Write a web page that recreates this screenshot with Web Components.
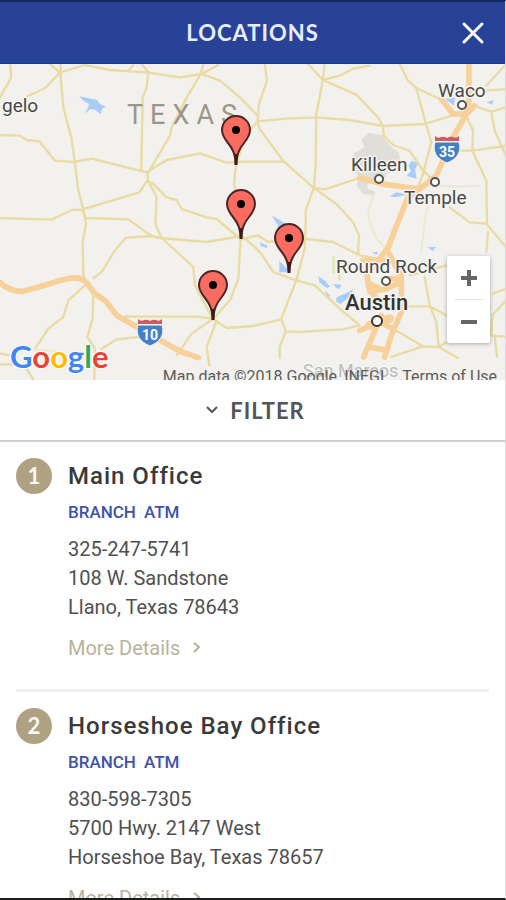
<!DOCTYPE html>
<html lang="en">
<head>
<meta charset="utf-8">
<meta name="viewport" content="width=device-width, initial-scale=1">
<title>Locations</title>
<style>
html,body{margin:0;height:100%}
body{font-family:Roboto,"Liberation Sans",sans-serif;color:#444;background:#fff}
</style>
</head>
<body>
<locations-app></locations-app>

<template id="app-t">
<style>
:host{display:flex;flex-direction:column;height:100vh;box-sizing:border-box;border-top:2px solid #17285c;border-right:1px solid #dcdcdc;border-bottom:2px solid #1c1c1c;background:#fefefe}
main{flex:1;min-height:0;overflow-y:auto;scrollbar-width:none}
ul{list-style:none;margin:0;padding:0}
</style>
<page-header>LOCATIONS</page-header>
<branch-map></branch-map>
<filter-bar>FILTER</filter-bar>
<main>
<ul>
<li><location-card number="1"><span slot="name">Main Office</span><span slot="phone">325-247-5741</span><span slot="street">108 W. Sandstone</span><span slot="city">Llano, Texas 78643</span></location-card></li>
<li><location-card number="2"><span slot="name">Horseshoe Bay Office</span><span slot="phone">830-598-7305</span><span slot="street">5700 Hwy. 2147 West</span><span slot="city">Horseshoe Bay, Texas 78657</span></location-card></li>
</ul>
</main>
</template>

<template id="header-t">
<style>
:host{display:grid;grid-template-columns:64px 1fr 64px;align-items:center;height:62px;flex:none;box-sizing:border-box;background:#284298;color:#e9edfb;border-bottom:1px solid #1f3a94}
h1{grid-column:2;margin:0;text-align:center;font:700 22px/30px Lato,sans-serif;letter-spacing:1px}
button{justify-self:center;display:grid;place-items:center;width:40px;height:40px;padding:0;border:0;background:none;color:#fff}
svg{display:block}
</style>
<h1><slot></slot></h1>
<button type="button" aria-label="Close"><svg width="24" height="24" viewBox="0 0 24 24" fill="none" stroke="currentColor" stroke-width="3" stroke-linecap="round"><path d="M3 3 21 21M21 3 3 21"/></svg></button>
</template>

<template id="filter-t">
<style>
:host{display:block;flex:none;background:#fefefe;border-bottom:2px solid #cfcfd1}
button{display:flex;align-items:center;justify-content:center;gap:12px;width:100%;height:60px;padding:2px 0 0 6px;border:0;background:none;color:#555557;font:700 22px/30px Lato,sans-serif;letter-spacing:1px}
</style>
<button type="button" aria-expanded="false"><svg width="12" height="12" viewBox="0 0 12 12" fill="none" stroke="currentColor" stroke-width="2"><path d="M1 2 6 7 11 2"/></svg><span><slot></slot></span></button>
</template>

<template id="card-t">
<style>
:host{display:grid;grid-template-columns:36px 1fr;column-gap:16px;margin:0 16px;padding:16px 0 26px;border-bottom:3px solid #efefef}
.num{display:grid;place-items:center;width:36px;height:36px;border-radius:50%;background:#aea283;color:#fbfaf5;font:700 22px/36px Lato,sans-serif}
h2{margin:0;font-size:24px;line-height:36px;font-weight:500;letter-spacing:1px;color:#3a3a3a}
.tags{display:flex;gap:8px;margin:5px 0 10px;font-size:17px;line-height:26px;font-weight:500;color:#3f54a6}
address{font-style:normal;font-size:20px;line-height:29px;color:#505050}
address ::slotted(span){display:block}
a{display:inline-flex;align-items:center;gap:12px;margin-top:11px;font-size:20px;line-height:30px;color:#bab29b;text-decoration:none}
</style>
<div class="num"></div>
<div>
<h2><slot name="name"></slot></h2>
<div class="tags"><span>BRANCH</span><span>ATM</span></div>
<address><slot name="phone"></slot><slot name="street"></slot><slot name="city"></slot></address>
<a href="#details"><span>More Details</span><svg width="8" height="12" viewBox="0 0 8 12" fill="none" stroke="currentColor" stroke-width="2"><path d="M2 1 7 5 2 10"/></svg></a>
</div>
</template>

<template id="zoom-t">
<style>
:host{display:flex;flex-direction:column;width:43px;background:#fff;border-radius:2px;box-shadow:0 1px 4px rgba(0,0,0,.3)}
button{display:grid;place-items:center;height:43px;padding:0;border:0;background:none;color:#666}
hr{width:30px;height:1px;margin:0 auto;border:0;background:#e6e6e6}
</style>
<button type="button" aria-label="Zoom in"><svg width="16" height="16" viewBox="0 0 16 16" stroke="currentColor" stroke-width="4"><path d="M0 8H16M8 0V16"/></svg></button>
<hr>
<button type="button" aria-label="Zoom out"><svg width="16" height="16" viewBox="0 0 16 16" stroke="currentColor" stroke-width="4"><path d="M0 8H16"/></svg></button>
</template>

<template id="map-t">
<style>
:host{display:block;position:relative;flex:none;height:316px;overflow:hidden;background:#f2f1ee}
.canvas{display:block;width:100%;height:100%}
zoom-control{position:absolute;right:15px;top:192px}
.credit{position:absolute;right:8px;bottom:-7px;display:flex;gap:18px;font-size:16px;line-height:20px;color:#5c5c5c;white-space:nowrap}
.credit a{color:inherit;text-decoration:none}
.roads path{fill:none;stroke:#e9dba2;stroke-width:7;stroke-linejoin:round;stroke-linecap:round}
.roads path.faint{stroke:#ece7d0;stroke-width:5}
.roads path.hwy{stroke:#f8d09a;stroke-width:17}
.roads path.thick{stroke-width:26}
.roads .water path{fill:#a9cdf8;stroke:none}
.roads path.base{fill:#dfded8;stroke:none}
.town{fill:#fff;stroke:#555;stroke-width:2}
.lbl{fill:#484848;stroke:#f6f5f2;stroke-width:3;paint-order:stroke;stroke-linejoin:round;font-size:19px}
</style>
<svg class="canvas" viewBox="0 0 505 316" preserveAspectRatio="xMidYMid slice" role="img" aria-label="Map of central Texas">
<defs>
<g id="pin"><path d="M0 0C-1-11-3-16-8-22C-12-27-14-30-14-35A14 14 0 0 1 14-35C14-30 12-27 8-22C3-16 1-11 0 0Z" fill="#fa6b60" stroke="#4a2523" stroke-width="2"/><path d="M0 0V-11" stroke="#3b1a19" stroke-width="3"/><circle cy="-35" r="4" fill="#000"/></g>
<g id="shield"><path d="M-12-6H12C15 4 10 11 0 15C-10 11-15 4-12-6Z" fill="#4480c5" stroke="#f6f5f2"/><path d="M-12-7V-12Q-9-9-6-11Q-3-12 0-10Q3-12 6-11Q9-9 12-12V-7Z" fill="#cf5b60"/></g>
</defs>
<g class="roads" transform="scale(.33333)">
<path class="base" d="M1085 225 1105 207 1145 213 1170 245 1195 265 1205 300 1165 325 1150 345 1105 345 1102 375 1125 382 1120 392 1090 390 1070 365 1075 335 1062 315 1060 270 1092 250Z"/>
<g class="water">
<path d="M238 97 265 103 290 107 300 120 318 128 306 134 302 151 285 137 270 136 255 150 268 120 250 110Z"/>
<path d="M1335 105 1365 100 1362 125ZM1460 115 1480 108 1476 122ZM1235 290 1255 298 1245 315 1250 345 1220 335 1233 320 1225 305ZM1170 396 1190 385 1220 392 1185 400ZM815 455 835 465 850 475 875 485 860 505 845 490 830 478ZM835 480 850 500 825 515ZM780 535 803 545 800 552 782 546ZM838 590 862 615 864 625 838 625ZM955 637 975 650 990 668 980 672 958 655ZM1000 660 1025 663 1018 675 1008 672ZM975 680 990 695 983 704ZM1010 700 1045 685 1060 675 1048 700 1020 720 1008 712ZM1115 566 1135 563 1130 572ZM1283 550 1308 548 1298 562Z"/>
</g>
<path d="M1001 580V625M1018 630V645" style="stroke:#d9e9a8"/>
<path d="M30 0 34 40 0 100M150 0 180 25 136 72 80 98M180 25 215 15 255 3 330 18 440 25 540 40 605 30 655 3M385 20 400 3M425 0 445 25 440 70 428 100 424 315M610 0 602 30 555 110 515 190 510 215 445 325M605 30 660 50 720 100 773 155M182 0 182 40 190 130 215 225 225 300 235 380 250 435 258 480 248 534 250 634 260 659M0 213 60 215 80 228 118 232 165 290 220 294 275 284 440 325M440 325 500 288 600 268 680 296 740 293 849 293M708 300 702 360 712 400M708 300 740 210 773 172M443 325 443 348 418 385 245 437 215 438 155 467 0 462M443 348 470 400 466 480 485 522 580 609 585 664 638 764M455 355 500 400 530 408 545 435 620 460 650 465 710 516M245 437 258 462 385 466 455 516"/>
<g transform="translate(759 0)">
<path d="M35 0 42 50 18 120 14 175 20 195 90 290 180 370 250 420 300 474 318 514 315 569M14 172 100 164 190 160 290 168 390 186 515 180 620 148M215 0 210 45 190 150 188 300 183 370 158 440 158 480 155 554 130 649M165 0 210 48 310 92 375 160 390 186 392 215 420 243 470 260 510 320 545 352M210 48 260 35 300 14 350 5M440 0 465 50 490 72 560 105M490 72 520 185 535 235 510 330 495 370M185 372 215 376 320 342M755 5 700 65M695 80 759 75M660 125 715 143 759 130M715 143 725 200 759 275M640 155 660 200 658 260H620M658 260 759 245M658 260 700 350 702 475M590 430 650 475 700 479 759 549"/>
<path class="faint" d="M365 385 345 440 350 474 370 524 400 554M560 365 620 368 680 365M525 420 515 474 505 564"/>
<path class="hwy" d="M648 0V110L640 150 600 220 550 335 500 375 465 400 435 474 400 564M565 105 600 150 640 150 665 125M320 342 400 362 500 375"/>
</g>
<g transform="translate(0 474)">
<path d="M280 168 305 150 345 85 378 47 455 42 480 48 620 60 725 42 759 70 784 95 819 150 889 175M722 50 715 170 690 235 640 290M375 284H590L638 290 680 318 759 312 844 292M640 290 575 335 530 400M648 300 620 375 628 430M255 190 205 235 190 285 145 320 105 380M265 190 280 220 278 290 262 345 285 380 283 474M305 380 350 352 415 345M0 395 30 400M0 427H60M80 440 100 474M725 52 774 40 804 60"/>
<path class="faint" d="M105 383 165 387"/>
<path class="hwy" d="M0 182Q30 210 70 208L160 182Q220 162 240 170C270 180 268 200 285 215L315 235 350 280 410 315 490 360 545 390 595 407"/>
</g>
<g transform="translate(759 474)">
<path d="M45 60 150 50 240 60 320 100 390 112M130 175 185 190 260 260 320 310 270 322 200 326 145 330 98 328 80 375V408M130 175 85 290 98 328M515 165 530 250 550 300 557 375 615 408M460 253H530L580 280M420 320 510 373 557 375 650 320M510 373 415 405M470 160 580 130M705 30 700 90M720 215 759 200M759 235 718 280 715 340 759 344M725 340 732 405"/>
<path class="hwy" d="M410 70 380 110 340 150 350 205 390 250M445 150V270L415 340 395 405M385 280 332 405M345 375 400 385M320 325 380 300 420 320M350 210 400 200 445 180M405 90 420 115 445 170H415M330 115H415"/>
<path class="hwy thick" d="M350 190 372 200M350 310 410 290"/>
</g>
</g>
<g class="lbl">
<text x="2" y="48">gelo</text><text x="438" y="33">Waco</text><text x="351" y="107">Killeen</text><text x="404" y="140">Temple</text><text x="336" y="209">Round Rock</text>
<text x="345" y="246" style="font-size:22px;fill:#333;font-weight:500">Austin</text>
<text x="303" y="313" style="font-size:18px;fill:#bbb">San Marcos</text>
</g>
<text x="127" y="60" style="font-size:27px;letter-spacing:7px;fill:#9b9787">TEXAS</text>
<g class="town"><circle cx="462" cy="41" r="4"/><circle cx="379" cy="115" r="4"/><circle cx="435" cy="118" r="4"/><circle cx="386" cy="217" r="4"/><circle cx="377" cy="257" r="5" style="stroke:#333"/></g>
<g style="fill:#fff;font:700 14px Roboto;text-anchor:middle"><use href="#shield" x="447" y="84"/><text x="447" y="93">35</text><use href="#shield" x="150" y="267"/><text x="150" y="276">10</text></g>
<use href="#pin" x="236" y="101"/><use href="#pin" x="241" y="175"/><use href="#pin" x="289" y="209"/><use href="#pin" x="213" y="256"/>
<text x="10" y="304" style="font:700 31px Lato;paint-order:stroke;stroke:#fff;stroke-width:2"><tspan fill="#4285f4">G</tspan><tspan fill="#ea4335">o</tspan><tspan fill="#fbbc05">o</tspan><tspan fill="#4285f4">g</tspan><tspan fill="#34a853">l</tspan><tspan fill="#ea4335">e</tspan></text>
</svg>
<zoom-control></zoom-control>
<div class="credit"><span>Map data ©2018 Google, INEGI</span><a href="#terms">Terms of Use</a></div>
</template>

<script>
const define = (name, id, setup) => customElements.define(name, class extends HTMLElement {
  constructor() {
    super();
    this.attachShadow({ mode: 'open' }).append(document.getElementById(id).content.cloneNode(true));
  }
  connectedCallback() { if (setup) setup(this); }
});
define('page-header', 'header-t');
define('zoom-control', 'zoom-t');
define('branch-map', 'map-t');
define('filter-bar', 'filter-t');
define('location-card', 'card-t', el => {
  el.shadowRoot.querySelector('.num').textContent = el.getAttribute('number');
});
define('locations-app', 'app-t');
</script>
</body>
</html>
